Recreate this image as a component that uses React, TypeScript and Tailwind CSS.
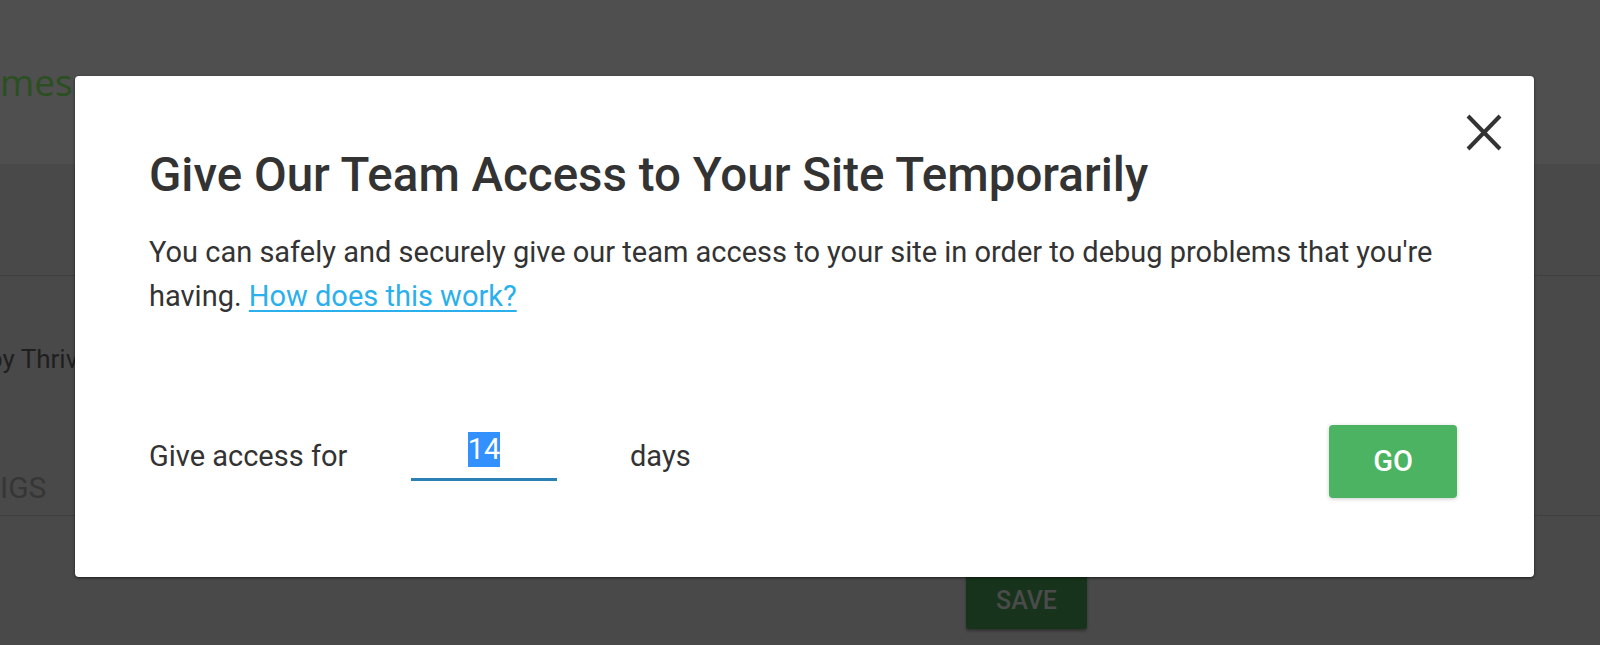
export default function App() {
  return (
    <div className="relative w-[1600px] h-[645px] overflow-hidden bg-[#494949] font-[Roboto,'Liberation_Sans',sans-serif]">
      {/* Background page (dimmed) */}
      <div className="h-[164px] bg-[#4f4f4f] pt-[57px]">
        <div className="font-['Open_Sans',sans-serif] text-[37px] leading-[50px] text-[#2b4f21]">mes</div>
      </div>
      <div className="h-[112px] border-b border-[#3f3f3f]" />
      <div className="h-[240px] border-b border-[#3f3f3f] pt-[68px]">
        <div className="ml-[-12px] text-[26px] leading-[30px] text-[#1f1f1f] whitespace-nowrap">by Thrive Themes</div>
        <div className="mt-[96px] text-[30px] leading-[36px] text-[#363636]">IGS</div>
      </div>
      <div className="pt-[57px]">
        <div className="ml-[966px] w-[121px] h-[56px] rounded-[3px] bg-[#17331b] shadow-[0_2px_3px_rgba(0,0,0,0.35)] flex items-center justify-center text-[25px] font-medium text-[#4b4b4b]">
          SAVE
        </div>
      </div>

      {/* Modal */}
      <div className="absolute left-[75px] top-[76px] w-[1459px] h-[501px] bg-white rounded-[4px] shadow-[0_1px_3px_rgba(0,0,0,0.6)] pt-[73px] pl-[74px] pr-[70px]">
        <button className="absolute right-[32px] top-[38px] w-[36px] h-[37px]" aria-label="Close">
          <svg width="36" height="37" viewBox="0 0 36 37">
            <line x1="2" y1="2" x2="34" y2="35" stroke="#333" strokeWidth="4" />
            <line x1="34" y1="2" x2="2" y2="35" stroke="#333" strokeWidth="4" />
          </svg>
        </button>
        <h2 className="text-[47.5px] leading-[52px] font-medium text-[#333333] whitespace-nowrap">
          Give Our Team Access to Your Site Temporarily
        </h2>
        <p className="mt-[29px] text-[29px] leading-[44px] text-[#333333]">
          You can safely and securely give our team access to your site in order to debug problems that you're having.{" "}
          <a href="#" className="text-[#2ab0ec] underline underline-offset-[4px]">How does this work?</a>
        </p>
        <div className="mt-[107px] mr-[7px] flex items-start">
          <div className="w-[262px] mt-[9px] text-[29px] leading-[44px] text-[#333333]">Give access for</div>
          <div className="w-[146px] mt-[7px] flex justify-center border-b-[3px] border-[#2b80b5] pb-[11px]">
            <span className="inline-block h-[35px] leading-[35px] text-[29px] bg-[#3390ff] text-white">14</span>
          </div>
          <div className="ml-[73px] mt-[9px] text-[29px] leading-[44px] text-[#333333]">days</div>
          <button className="ml-auto w-[128px] h-[73px] rounded-[4px] bg-[#4bb361] text-white text-[29px] font-medium shadow-[0_1px_4px_rgba(0,0,0,0.2)]">
            GO
          </button>
        </div>
      </div>
    </div>
  );
}
